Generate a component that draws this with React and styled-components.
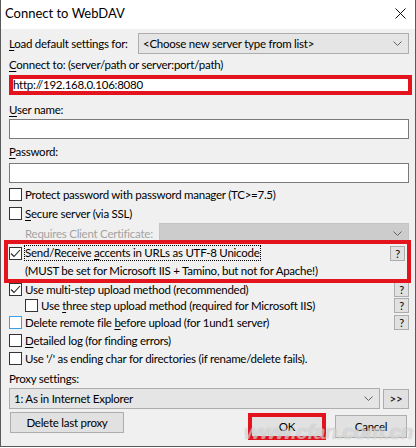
import React from 'react';
import styled, { createGlobalStyle } from 'styled-components';

const GlobalStyle = createGlobalStyle`
  html, body { margin: 0; padding: 0; background: #fff; }
  body {
    font-family: Lato, "Segoe UI", sans-serif;
    font-size: 11.5px;
    letter-spacing: -0.25px;
    color: #000;
  }
  u { text-underline-offset: 2px; }
`;

const Window = styled.div`
  position: relative;
  width: 416px;
  height: 447px;
  box-sizing: border-box;
  border: 1px solid #5a5a5a;
  border-top: none;
  background: #f0f0f0;
  overflow: hidden;
`;

const TitleBar = styled.div`
  height: 29px;
  background: #fff;
  display: flex;
  align-items: center;
  justify-content: space-between;
  padding: 0 9px 3px 4px;
  box-sizing: border-box;
`;

const Title = styled.span`
  font-size: 13px;
  letter-spacing: 0;
`;

const Body = styled.div`
  padding: 0 6px 0 8px;
  display: flex;
  flex-direction: column;
`;

const Row = styled.div`
  display: flex;
  align-items: center;
  justify-content: space-between;
  height: ${p => p.h || 16}px;
  margin-top: ${p => p.mt || 0}px;
  padding-left: ${p => p.indent || 0}px;
  white-space: nowrap;
`;

const Label = styled.div`
  height: 16px;
  line-height: 16px;
  margin-top: ${p => p.mt || 0}px;
  color: ${p => (p.disabled ? '#a3a3a3' : '#000')};
  white-space: nowrap;
`;

const SelectBox = styled.div`
  width: ${p => p.w}px;
  height: ${p => p.h || 21}px;
  box-sizing: border-box;
  border: 1px solid ${p => (p.disabled ? '#c4c4c4' : '#adadad')};
  background: ${p => (p.disabled ? '#cccccc' : '#e5e5e5')};
  display: flex;
  align-items: center;
  justify-content: space-between;
  padding: 0 6px 0 4px;
  white-space: nowrap;
  overflow: hidden;
  flex: none;
`;

const TextInput = styled.div`
  height: 20px;
  box-sizing: border-box;
  margin-top: ${p => p.mt || 0}px;
  border: 1px solid #7a7a7a;
  background: #fff;
`;

const UrlBox = styled.div`
  height: 20px;
  box-sizing: border-box;
  margin: 2px -3px 0 0;
  border: 4px solid #e3141e;
  background: #fff;
  line-height: 12px;
  overflow: hidden;
  white-space: nowrap;
`;

const Highlight = styled.div`
  position: relative;
  z-index: 1;
  margin: -4px -2px 0 -5px;
  border: 4px solid #e3141e;
  padding: 0 2px 0 1px;
`;

const Box = styled.span`
  width: 13px;
  height: 13px;
  box-sizing: border-box;
  border: 1px solid ${p => (p.hover ? '#3d9fe8' : '#333')};
  background: #fff;
  flex: none;
  display: flex;
  align-items: center;
  justify-content: center;
  margin-right: 3px;
`;

const CheckLabel = styled.span`
  display: flex;
  align-items: center;
  white-space: nowrap;
`;

const Focus = styled.span`
  outline: 1px dotted #000;
  outline-offset: 0;
  line-height: 14px;
`;

const HelpButton = styled.span`
  width: 15px;
  height: 15px;
  box-sizing: border-box;
  border: 1px solid #adadad;
  background: #e1e1e1;
  font-size: 11px;
  line-height: 13px;
  text-align: center;
  flex: none;
`;

const Note = styled.div`
  height: 16px;
  line-height: 16px;
  padding: 1px 0 0 16px;
  white-space: nowrap;
`;

const Chevron = () => (
  <svg width="9" height="5" viewBox="0 0 9 5">
    <polyline points="0.5,0.5 4.5,4.5 8.5,0.5" fill="none" stroke="#606060" strokeWidth="1" />
  </svg>
);

const Tick = () => (
  <svg width="11" height="11" viewBox="0 0 11 11">
    <polyline points="1,5.5 4,8.5 10,2" fill="none" stroke="#222" strokeWidth="1.1" />
  </svg>
);

const Check = ({ checked, hover, children }) => (
  <CheckLabel>
    <Box hover={hover}>{checked && <Tick />}</Box>
    {children}
  </CheckLabel>
);

const Button = styled.div`
  width: ${p => p.w}px;
  height: ${p => p.h}px;
  box-sizing: border-box;
  margin-top: ${p => p.mt || 0}px;
  border: 1px solid #adadad;
  background: #e1e1e1;
  display: flex;
  align-items: center;
  justify-content: center;
  flex: none;
`;

const ButtonRow = styled.div`
  display: flex;
  align-items: flex-start;
  margin-top: 3px;
  padding-left: 1px;
`;

const OkFrame = styled.div`
  width: 78px;
  height: 27px;
  box-sizing: border-box;
  margin: 1px 0 0 auto;
  border: 4px solid #e3141e;
  background: #e1e1e1;
  display: flex;
  align-items: center;
  justify-content: center;
`;

const Watermark = styled.div`
  position: absolute;
  right: 2px;
  bottom: 2px;
  font-family: "Liberation Sans", sans-serif;
  font-size: 21px;
  font-weight: bold;
  font-style: italic;
  color: rgba(255, 255, 255, 0.5);
  text-shadow: 0 0 1px rgba(90, 90, 90, 0.4);
  letter-spacing: -0.5px;
  pointer-events: none;
  z-index: 2;
`;

export default function App() {
  return (
    <>
      <GlobalStyle />
      <Window>
        <TitleBar>
          <Title>Connect to WebDAV</Title>
          <svg width="11" height="11" viewBox="0 0 11 11">
            <path d="M0.5 0.5 L10.5 10.5 M10.5 0.5 L0.5 10.5" stroke="#111" strokeWidth="1" />
          </svg>
        </TitleBar>
        <Body>
          <Row h={21} mt={4}>
            <span><u>L</u>oad default settings for:</span>
            <SelectBox w={271}>
              <span>&lt;Choose new server type from list&gt;</span>
              <Chevron />
            </SelectBox>
          </Row>
          <Label mt={3}><u>C</u>onnect to: (server/path or server:port/path)</Label>
          <UrlBox>http://192.168.0.106:8080</UrlBox>
          <Label mt={7}><u>U</u>ser name:</Label>
          <TextInput mt={1} />
          <Label mt={5}><u>P</u>assword:</Label>
          <TextInput mt={3} />
          <Row h={18} mt={2}>
            <Check>Protect password with password manager (TC&gt;=7.5)</Check>
          </Row>
          <Row h={18} mt={1}>
            <Check><span><u>S</u>ecure server (via SSL)</span></Check>
          </Row>
          <Row h={21} mt={1} indent={16}>
            <Label disabled>Requires Client Certificate:</Label>
            <SelectBox w={250} disabled>
              <span />
              <Chevron />
            </SelectBox>
          </Row>
          <Highlight>
            <Row h={18}>
              <Check checked>
                <Focus>Send/Receive <u>a</u>ccents in URLs as UTF-8 Unicode</Focus>
              </Check>
              <HelpButton>?</HelpButton>
            </Row>
            <Note>(MUST be set for Microsoft IIS + Tamino, but not for Apache!)</Note>
          </Highlight>
          <Row h={16} mt={-2}>
            <Check checked>Use multi-step upload method (recommended)</Check>
            <HelpButton>?</HelpButton>
          </Row>
          <Row h={16} indent={16}>
            <Check><span>Use <u>t</u>hree step upload method (required for Microsoft IIS)</span></Check>
            <HelpButton>?</HelpButton>
          </Row>
          <Row h={16} mt={1}>
            <Check hover><span>Delete remote file <u>b</u>efore upload (for 1und1 server)</span></Check>
            <HelpButton>?</HelpButton>
          </Row>
          <Row h={16} mt={2}>
            <Check><span><u>D</u>etailed log (for finding errors)</span></Check>
          </Row>
          <Row h={16} mt={2}>
            <Check>Use '/' as ending char for directories (if rename/delete fails).</Check>
          </Row>
          <Label mt={5}>Proxy settings:</Label>
          <Row h={21} mt={1}>
            <SelectBox w={371}>
              <span>1: As in Internet Explorer</span>
              <Chevron />
            </SelectBox>
            <Button w={26} h={20}>&gt;&gt;</Button>
          </Row>
          <ButtonRow>
            <Button w={114} h={21}>Delete last proxy</Button>
            <OkFrame>OK</OkFrame>
            <Button w={72} h={23} mt={3} style={{ marginLeft: 9, marginRight: 2 }}>Cancel</Button>
          </ButtonRow>
        </Body>
        <Watermark>www.cfan.com.cn</Watermark>
      </Window>
    </>
  );
}
